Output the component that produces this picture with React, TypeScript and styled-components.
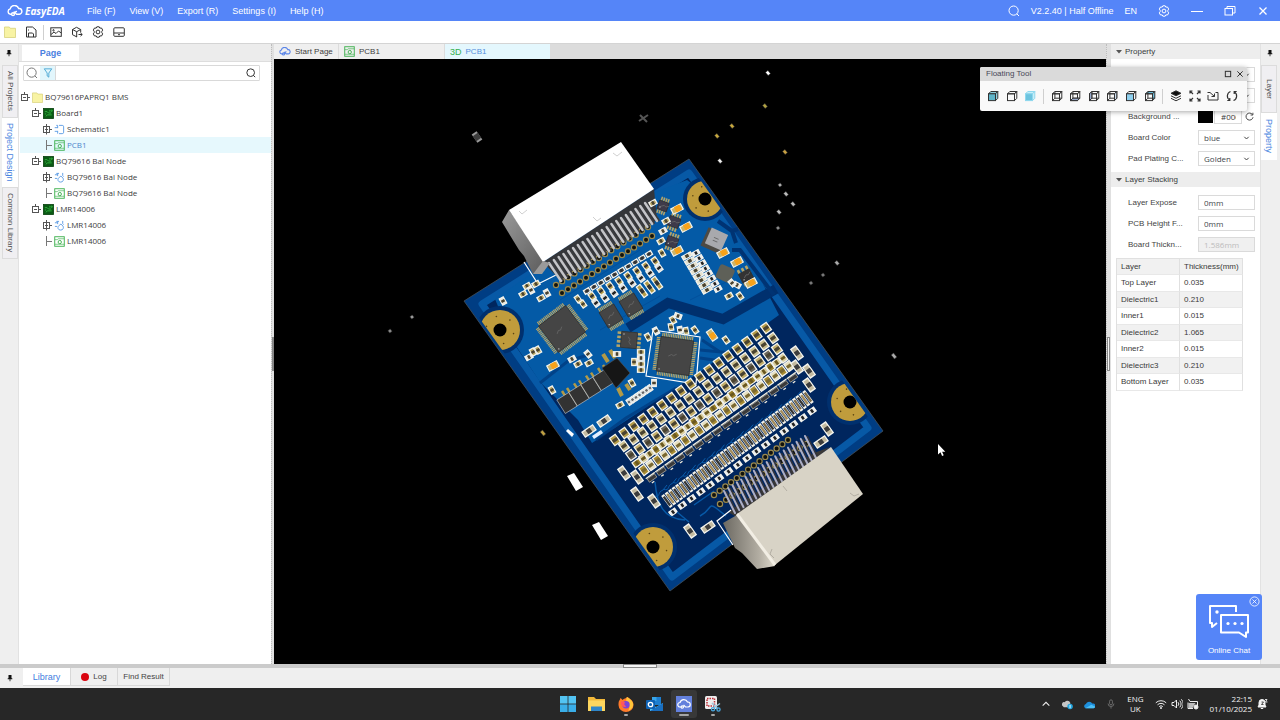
import React from "react";
import styled, { createGlobalStyle, css } from "styled-components";

const GlobalStyle = createGlobalStyle`
  *, *::before, *::after { box-sizing: border-box; }
  body { margin: 0; background: #efefef; color: #3a3a3a; font: 8px/12px "Liberation Sans", Arial, sans-serif; }
  button, input, select { font: inherit; color: inherit; margin: 0; padding: 0; border: 0; background: none; }
  button { display: flex; align-items: center; justify-content: center; }
  svg { display: block; flex: none; }
`;

const uiFont = css`font-family: "Open Sans", "Noto Sans", sans-serif;`;

/* ---------- shell ---------- */
const Shell = styled.div`display: flex; flex-direction: column; min-height: 100vh;`;
const TitleBar = styled.header`
  display: flex; align-items: center; height: 21px; padding: 0 11px 0 7px;
  background: #5585f8; color: #fff; font-size: 9px;
`;
const Brand = styled.a`
  ${uiFont} display: flex; align-items: center; gap: 2px; width: 80px; color: #fff;
  font-size: 10px; font-weight: 700; font-style: italic; text-decoration: none;
`;
const Menu = styled.nav`display: flex; gap: 14px; flex: 1;`;
const MenuButton = styled.button`height: 20px;`;
const TitleTools = styled.div`display: flex; align-items: center; gap: 11px;`;
const WindowTools = styled.div`display: flex; align-items: center; gap: 21px; padding-left: 10px;`;

const Divider = styled.span`width: 1px; height: 15px; background: #cfcfcf;`;
const ToolBar = styled.div`
  display: flex; align-items: center; gap: 9px; height: 22px; padding: 0 4px; background: #fff;
  ${Divider} { margin: 0 -3px; }
`;
const Workspace = styled.main`display: flex; flex: 1; position: relative; border-top: 1px solid #d4d4d4;`;

/* ---------- side rails ---------- */
const Rail = styled.aside<{ $right?: boolean }>`
  display: flex; flex-direction: column; align-items: ${p => (p.$right ? "flex-start" : "flex-end")};
  width: ${p => (p.$right ? 20 : 19)}px; background: #efefef;
  border-${p => (p.$right ? "left" : "right")}: 1px solid #e2e2e2;
`;
const PinSlot = styled.button`width: 18px; height: 21px; padding-bottom: 4px;`;
const RailTab = styled.button<{ $active?: boolean; $size: number }>`
  width: 16px; height: ${p => p.$size}px; writing-mode: vertical-rl;
  border: 1px solid ${p => (p.$active ? "#fff" : "#dcdcdc")};
  background: ${p => (p.$active ? "#fff" : "#f0eff2")};
  color: ${p => (p.$active ? "#4a86e0" : "#505050")};
  font-size: ${p => (p.$active ? 9 : 8)}px;
`;

/* ---------- project tree ---------- */
const ProjectPanel = styled.section`display: flex; flex-direction: column; width: 252px; background: #fff;`;
const PanelTabs = styled.div`
  display: flex; align-items: flex-end; height: 18px; padding-left: 3px;
  background: #ececec; border-bottom: 1px solid #ddd;
`;
const PanelTab = styled.button`
  width: 57px; height: 16px; background: #fff; color: #4a80e0; font-size: 9px; font-weight: 700;
`;
const SearchBar = styled.form`
  display: flex; align-items: center; height: 16px; margin: 3px 11px 8px 4px;
  border: 1px solid #d9d9d9; border-radius: 1px;
`;
const SearchIcon = styled.button<{ $tint?: boolean }>`
  width: 16px; height: 14px; background: ${p => (p.$tint ? "#e2f6fc" : "transparent")};
  border-right: 1px solid ${p => (p.$tint ? "#d9d9d9" : "transparent")};
`;
const SearchInput = styled.input`flex: 1; min-width: 0; height: 14px; outline: 0;`;
const Tree = styled.ul`list-style: none; margin: 0; padding: 0;`;
const TreeRow = styled.li<{ $level: number; $active?: boolean }>`
  ${uiFont} display: flex; align-items: center; gap: 2px; height: 16px;
  padding-left: ${p => p.$level * 11}px; margin-left: 1px;
  background: ${p => (p.$active ? "#e6f8fd" : "transparent")};
  color: ${p => (p.$active ? "#4d86cc" : "#404040")};
`;

const Splitter = styled.div<{ $w: number }>`
  display: flex; align-items: center; width: ${p => p.$w}px; background: #e0e0e0; border-left: 1px dotted #bdbdbd;
`;
const Grip = styled.button`width: 3px; height: 34px; border: 1px solid #888; background: #f4f4f4;`;

/* ---------- documents ---------- */
const Documents = styled.section`display: flex; flex: 1; min-width: 0; flex-direction: column; background: #000;`;
const DocTabs = styled.div`display: flex; height: 15px; background: #dcdcdc;`;
const DocTab = styled.button<{ $w: number; $active?: boolean }>`
  justify-content: flex-start; gap: 4px; width: ${p => p.$w}px; padding-left: 5px;
  border-right: 1px solid #dcdcdc;
  background: ${p => (p.$active ? "#e4f7fd" : "#efefef")}; color: ${p => (p.$active ? "#5590dc" : "#404040")};
`;
const ThreeD = styled.span`color: #35b052; font-size: 9px;`;
const Scene = styled.div`flex: 1; display: flex; min-height: 0; svg { flex: 1; width: 100%; min-width: 0; }`;

/* ---------- floating tool ---------- */
const FloatTool = styled.div`
  position: absolute; top: 23px; right: 33px; width: 267px; height: 44px; background: #f9f9f9;
  box-shadow: 0 1px 5px rgba(0, 0, 0, 0.35); border-radius: 2px; overflow: hidden;
`;
const FloatHead = styled.div`
  display: flex; align-items: center; height: 14px; padding: 0 1px 0 6px; background: #dadada; color: #484858;
`;
const FloatTitle = styled.span`flex: 1;`;
const FloatIcons = styled.div`display: flex; align-items: center; justify-content: space-between; height: 30px; padding: 0 9px 0 7px;`;
const IconButton = styled.button`min-width: 12px; height: 14px;`;

/* ---------- properties ---------- */
const PropertyPanel = styled.section`width: 149px; background: #fff;`;
const Group = styled.button`
  justify-content: flex-start; gap: 2px; width: 100%; height: 15px; padding-left: 4px; background: #ededed; color: #3a4040;
`;
const Fields = styled.div`display: flex; flex-direction: column; gap: 6px; padding: 8px 5px 6px 17px;`;
const Field = styled.div`display: flex; align-items: center; height: 15px;`;
const FieldLabel = styled.label`width: 70px; white-space: nowrap; color: #444;`;
const box = css`
  ${uiFont} width: 57px; height: 15px; padding: 0 5px; border: 1px solid #dadada; background: #fff; color: #3f464c;
`;
const TextField = styled.input`${box} &:disabled { background: #f0f0f0; color: #bcbcbc; }`;
const SelectWrap = styled.div`
  display: grid; align-items: center; width: 57px;
  & > * { grid-area: 1 / 1; }
  svg { justify-self: end; margin-right: 5px; pointer-events: none; }
`;
const Select = styled.select`${box} appearance: none; line-height: 12px;`;
const ColorRow = styled.div`display: flex; align-items: center; gap: 1px; width: 57px;`;
const Swatch = styled.span`width: 15px; height: 12px; background: #000;`;
const HexField = styled.input`${uiFont} width: 28px; height: 15px; padding: 0 5px 0 6px; border: 1px solid #dadada;`;
const LayerTable = styled.table`
  width: 127px; margin-left: 5px; border-spacing: 0; table-layout: fixed; text-align: left;
  border-top: 1px solid #e0e0e0; border-left: 1px solid #e0e0e0;
  th, td { height: 16px; padding: 0 0 0 4px; font-weight: 400; line-height: 12px;
    border-right: 1px solid #e0e0e0; border-bottom: 1px solid #e8e8e8; white-space: nowrap; }
  th, tbody tr:nth-child(even) td { background: #f1f1f1; }
  tbody tr:nth-child(odd) td { height: 17px; }
`;

/* ---------- bottom ---------- */
const BottomSplitter = styled.div`display: flex; justify-content: center; height: 4px; background: #cbcbcb;`;
const BottomGrip = styled.button`width: 34px; height: 4px; border: 1px solid #888; background: #f4f4f4;`;
const BottomBar = styled.div`display: flex; height: 20px; background: #efefef;`;
const BottomPin = styled.button`width: 23px; padding-right: 3px;`;
const BottomTab = styled.button<{ $w: number; $active?: boolean }>`
  gap: 4px; width: ${p => p.$w}px; height: 18px; border-right: 1px solid #d8d8d8; border-bottom: 1px solid #d8d8d8;
  background: ${p => (p.$active ? "#fff" : "#efefef")}; color: ${p => (p.$active ? "#3f7ee0" : "#444")};
  font-size: ${p => (p.$active ? 9 : 8)}px;
`;
const RedDot = styled.span`width: 8px; height: 8px; border-radius: 50%; background: #da0510;`;

const TaskBar = styled.footer`
  ${uiFont} display: grid; grid-template-columns: 1fr auto 1fr; align-items: center;
  height: 32px; background: #272727; color: #f2f2f2; line-height: 10px;
`;
const Apps = styled.div`grid-column: 2; display: flex; gap: 3px;`;
const AppButton = styled.button<{ $open?: boolean; $active?: boolean }>`
  flex-direction: column; gap: 2px; width: 26px; height: 28px; padding-top: 4px; border-radius: 3px;
  background: ${p => (p.$active ? "#383838" : "transparent")};
  &::after { content: ""; height: 2px; border-radius: 1px; width: ${p => (p.$active ? 10 : 4)}px;
    background: ${p => (p.$open ? "#a5a5a5" : "transparent")}; }
`;
const Tray = styled.div`display: flex; align-items: center; justify-content: flex-end; padding-right: 12px; gap: 11px;`;
const TrayGroup = styled.div`display: flex; align-items: center; gap: 4px;`;
const TrayText = styled.div<{ $end?: boolean }>`text-align: ${p => (p.$end ? "right" : "center")};`;

const Chat = styled.aside`
  position: absolute; right: 18px; bottom: 4px; width: 66px; height: 66px; border-radius: 3px;
  background: #5585f8; color: #fff; display: flex; flex-direction: column; align-items: center;
`;
const ChatClose = styled.button`align-self: flex-end; width: 15px; height: 15px;`;
const ChatOpen = styled.button`flex-direction: column; gap: 5px; margin-top: -5px; color: #fff;`;

/* ---------- icons ---------- */
type IconProps = { s?: number; c?: string; w?: number; children: React.ReactNode };
const Icon = ({ s = 12, c = "#333", w = 1, children }: IconProps) => (
  <svg width={s} height={s} viewBox="0 0 12 12" fill="none" stroke={c} strokeWidth={w} aria-hidden="true">{children}</svg>
);
const Cloud = ({ c, width = 16, w = 1.4 }: { c: string; width?: number; w?: number }) => (
  <svg width={width} height={Math.round(width * 0.75)} viewBox="0 0 16 12" fill="none" stroke={c} strokeWidth={w} strokeLinecap="round" aria-hidden="true">
    <path d="M4.6 9.2H3.5A2.7 2.7 0 0 1 3.2 3.9 4.4 4.4 0 0 1 11.7 3.6 2.8 2.8 0 0 1 12.4 9.2H9.6L7.2 7" />
    <circle cx="6" cy="9.2" r="1.4" /><path d="M7 8.2L9.4 6.4" />
  </svg>
);
const Lens = ({ c = "#444", s = 12, w = 1 }: { c?: string; s?: number; w?: number }) => (
  <Icon s={s} c={c} w={w}><circle cx="5.6" cy="5.6" r="4.6" /><path d="M8.8 8.8L11 11" /></Icon>
);
const Gear = ({ c = "#333" }: { c?: string }) => (
  <Icon c={c}><path d="M4.8 .8h2.4l.6 1.300 1.700-.1 1.200 2.100-.9 1.300v1.200l.9 1.300-1.200 2.100-1.700-.1-.6 1.300H4.800l-.6-1.300-1.700.1-1.200-2.100.9-1.300V5.400l-.9-1.300L2.500 2l1.700.1z" /><circle cx="6" cy="6" r="1.900" /></Icon>
);
const Pin = () => (
  <svg width="6" height="8" viewBox="0 0 6 8" aria-hidden="true"><path d="M1.500 1h3v3.200h.8v1H3.400v2H2.600v-2H.7v-1h.8z" fill="#111" /></svg>
);
const Folder = ({ s = 12 }: { s?: number }) => (
  <svg width={s} height={s} viewBox="0 0 12 12" aria-hidden="true"><path d="M.5 1h4.800l1 1.300h5.200v9.200H.5z" fill="#f8f3a4" stroke="#d8d27c" strokeWidth=".8" /></svg>
);
const PcbIcon = () => (
  <Icon s={11} c="#3cb04c"><rect x=".8" y=".8" width="10.400" height="10.400" /><path d="M1 4h2.500l1.200-1H11M1 9h10" strokeWidth=".7" /><circle cx="6.300" cy="6.600" r="1.800" /></Icon>
);
const BoardIcon = () => (
  <Icon s={11} c="#37c244" w={0.9}><rect x=".5" y=".5" width="11" height="11" fill="#0b5a14" stroke="#0a4310" /><path d="M2 4h2.500l1.500 1.500h3M3 9l2-1.500h4.500M7.500 2v2M2 6.500h1.500" /><circle cx="9.500" cy="3" r=".7" /></Icon>
);
const SchIcon = ({ multi }: { multi?: boolean }) => (
  <Icon s={11} c="#5a9ae4">
    {multi
      ? <><path d="M1 3h3M1 7h2.500M2.500 1.500h3M4 1.500v3M9.500 1v3l1 1" /><path d="M7.500 4.500c-3 2-3.500 3-3 5 .8 2 4.500 2 5.500 0 .8-2.500-.5-3.500-2.500-5z" /></>
      : <><path d="M5.500 1.500H9a1.500 1.500 0 0 1 1.500 1.500v6A1.500 1.500 0 0 1 9 10.500H5.500M4 1.500v3M4 7.500v3M.8 4h3.200M.8 8H4M2.500 1.500H4" /></>}
  </Icon>
);
const Expander = ({ kind }: { kind: "minus" | "plus" | "leaf" }) => (
  <svg width="10" height="16" viewBox="0 0 10 16" fill="none" stroke="#555" aria-hidden="true">
    {kind === "leaf" ? <path d="M4.500 3v10M5 8.500h5" stroke="#777" /> : <><rect x="1.500" y="5.500" width="6" height="6" /><path d="M3 8.500h3M8 8.500h2M4.500 3v2" />{kind === "plus" && <path d="M4.500 6v5M4.500 12v1.500" />}</>}
  </svg>
);
const Caret = () => <svg width="8" height="6" viewBox="0 0 8 6" aria-hidden="true"><path d="M1 1h6L4 4.500z" fill="#555" /></svg>;
const Chevron = () => <svg width="7" height="6" viewBox="0 0 7 6" fill="none" stroke="#444" aria-hidden="true"><path d="M1.300 1.800L3.500 4l2.200-2.200" /></svg>;

const Cube = ({ front = "none", side = "none", back, face }: { front?: string; side?: string; back?: string; face?: "bottom" | "left" | "right" }) => (
  <Icon c={back === "glow" ? "#8ed8ee" : "#333"}>
    <path d="M1.500 3.800L3.800 1.500h7L8.500 3.800z" fill={side} /><path d="M8.500 3.800l2.300-2.300v6.800L8.500 10.600z" fill={side} />
    <rect x="1.500" y="3.800" width="7" height="6.800" fill={front} />
    {back === "wire" && <path d="M3.900 1.600v6.600h6.700M1.600 10.500l2.300-2.300" />}
    {face === "bottom" && <path d="M1.500 10.600l2.300-2.400h7L8.500 10.600z" fill="#9ac" />}
    {face === "left" && <path d="M1.500 3.800l2.300-2.300v6.700l-2.300 2.400z" fill="#9ac" />}
    {face === "right" && <path d="M8.500 3.800l2.300-2.300v6.700l-2.300 2.400z" fill="#cde" />}
  </Icon>
);

/* ---------- board scene ---------- */
type P = [number, number];
const GOLD = "#b39a46";
const pts = (list: P[]) => list.map(p => p.join(",")).join(" ");
const along = (a: P, b: P, n: number, draw: (x: number, y: number, i: number) => React.ReactNode) =>
  Array.from({ length: n }, (_, i) => {
    const t = n === 1 ? 0 : i / (n - 1);
    return <React.Fragment key={i}>{draw(a[0] + (b[0] - a[0]) * t, a[1] + (b[1] - a[1]) * t, i)}</React.Fragment>;
  });

const Part = ({ x, y, r = 54, w = 9, h = 5, pad = GOLD, body = "#4a4330" }: { x: number; y: number; r?: number; w?: number; h?: number; pad?: string; body?: string }) => (
  <g transform={`translate(${x} ${y}) rotate(${r})`}>
    <rect x={-w / 2} y={-h / 2} width={w} height={h} fill={pad} stroke="#f4f4ee" strokeWidth="1.300" />
    <rect x={-w * 0.18} y={-h * 0.4} width={w * 0.36} height={h * 0.8} fill={body} />
  </g>
);
const Quad = ({ x, y, w, h, r, pins = 14, sides = 4, fill = "#454545" }: { x: number; y: number; w: number; h: number; r: number; pins?: number; sides?: number; fill?: string }) => (
  <g transform={`translate(${x} ${y}) rotate(${r})`}>
    {along([-w / 2 + 1.5, 0], [w / 2 - 1.5, 0], pins, px => (
      <path d={`M${px} ${-h / 2 - 4}V${h / 2 + 4}`} stroke="#b5a468" strokeWidth={(w / pins) * 0.65} />
    ))}
    {sides === 4 && along([0, -h / 2 + 1.5], [0, h / 2 - 1.5], pins, (_, py) => (
      <path d={`M${-w / 2 - 4} ${py}H${w / 2 + 4}`} stroke="#b5a468" strokeWidth={(h / pins) * 0.65} />
    ))}
    <rect x={-w / 2} y={-h / 2} width={w} height={h} fill={fill} stroke="#2a2a2a" strokeWidth=".7" />
    <path d={`M${-w / 5} 1l3-2 2 1 3-2`} stroke="#6a6a6a" strokeWidth=".7" fill="none" />
    <circle cx={-w / 2 + 2.5} cy={h / 2 - 2.5} r=".7" fill="#bbb" />
  </g>
);
const Mount = ({ x, y, r }: { x: number; y: number; r: number }) => (
  <g>
    <circle cx={x} cy={y} r={r + 4} fill="#00306e" /><circle cx={x} cy={y} r={r} fill="#c09c3c" />
    <circle cx={x} cy={y} r="6.500" fill="#000" />
    {[15, 75, 135, 195, 255, 315].map(a => (
      <circle key={a} cx={x + Math.cos((a * Math.PI) / 180) * r * 0.7} cy={y + Math.sin((a * Math.PI) / 180) * r * 0.7} r=".8" fill="#5a4414" />
    ))}
  </g>
);
const Via = ({ x, y }: { x: number; y: number }) => (
  <circle cx={x} cy={y} r="2.600" fill="#12120c" stroke="#9a8a50" strokeWidth="1.200" />
);

const outline: P[] = [[689, 159], [883, 431], [670, 591], [464, 301]];
const orange: [number, number, number][] = [
  [677, 209, -28], [686, 227, -28], [677, 251, -28], [723, 253, -28], [737, 262, -28], [751, 283, -28], [712, 335, 55], [553, 366, -28],
];
const loose: [number, number, number][] = [
  [503, 301, 60], [523, 294, -30], [527, 286, -30], [531, 290, 60], [536, 284, -30], [541, 298, -30], [547, 293, 60], [578, 299, 55], [583, 304, 55], [529, 357, -30], [533, 352, 60], [538, 350, 60], [572, 359, -30], [578, 364, -30], [589, 363, -30], [588, 354, 50],
  [653, 203, -30], [666, 221, -30], [663, 231, -30], [661, 241, -30], [662, 253, 60], [656, 331, 60], [648, 337, 60], [671, 327, 80], [680, 330, 80], [686, 331, 80], [673, 320, 60], [678, 316, 20], [695, 330, 55], [726, 340, 55],
  [617, 354, 0], [634, 362, 90], [641, 352, 0], [641, 358, 0], [641, 364, 0], [641, 370, 0], [654, 383, 90], [620, 405, -30], [632, 383, 60], [737, 285, 30], [729, 296, -30], [740, 296, 55], [732, 283, 50], [552, 390, 60],
];
const corners: [number, number, number][] = [
  [624, 473, 54], [637, 477, 54], [637, 494, 54], [654, 501, 54], [797, 353, 54], [797, 367, 54], [809, 371, 54], [809, 385, 54],
  [690, 531, 54], [708, 527, -35], [827, 429, 54], [821, 442, -35], [589, 431, -35], [604, 421, -35],
];
const debris: [number, number, string, number][] = [
  [768, 73, "#fff", 4], [765, 106, "#b0a040", 4], [732, 126, "#c8a83c", 4], [717, 136, "#c8a83c", 4], [785, 152, "#c8a040", 4], [720, 161, "#eee", 4],
  [780, 185, "#aaa", 3], [786, 194, "#bbb", 4], [793, 204, "#bbb", 4], [779, 212, "#bbb", 4], [778, 228, "#888", 3], [837, 263, "#aaa", 4], [823, 275, "#777", 3], [811, 283, "#777", 3], [894, 356, "#aaa", 5], [412, 317, "#999", 3], [390, 331, "#888", 3], [543, 433, "#c0a040", 5],
];

const BoardScene = () => (
  <svg viewBox="274 59 832 605" preserveAspectRatio="xMidYMid meet" role="img" aria-label="3D view of PCB1">
    <defs>
      <clipPath id="edge"><polygon points="689,164 878,431 671,586 470,305" /></clipPath>
      <linearGradient id="side" x1="0" y1="0" x2="1" y2="1"><stop offset="0" stopColor="#9a9a9a" /><stop offset="1" stopColor="#5b5b5b" /></linearGradient>
      <linearGradient id="sideB" x1="0" y1="0" x2="1" y2="0"><stop offset="0" stopColor="#6c6962" /><stop offset=".7" stopColor="#b3aea3" /><stop offset="1" stopColor="#ded9cc" /></linearGradient>
    </defs>
    <polygon points={pts(outline)} fill="#003d83" stroke="#44505a" strokeWidth=".8" />
    <polygon points="689,173 868,428 672,577 482,304" fill="#00265e" stroke="#0759a6" strokeWidth="7" strokeLinejoin="round" />
    <polygon points="495,299 640,198 687,180 700,190 740,244 763,284 779,315 737,345 700,372 592,443 578,420 540,382 512,340" fill="#045aa6" />
    <path d="M628 328L668 303 723 319 776 289" fill="none" stroke="#00306e" strokeWidth="10" />
    <path d="M718 221l14 10M736 243l-4-12 6-2M732 250l8 0 34 45" fill="none" stroke="#003373" strokeWidth="4" />
    <path d="M540 383l28-22 20-6M596 440l30-22 50-30M700 350l32 3M700 358l28 4M702 340l18 12" fill="none" stroke="#00387c" strokeWidth="3" opacity=".7" />
    <path d="M560 300l80-50M600 330l60-34M690 300l40-20" stroke="#02509c" strokeWidth="1" />
    <g clipPath="url(#edge)">
      <Mount x={705} y={199} r={18} /><Mount x={500} y={330} r={20} /><Mount x={850} y={402} r={19} /><Mount x={653} y={547} r={20} />
    </g>

    {/* upper connector */}
    <path d="M524 262l14 22 20-10" fill="none" stroke="#fff" strokeWidth="1.200" />
    <polygon points="543,262 654,189 657,220 562,282" fill="#34363a" />
    {along([556, 285], [648, 227], 16, (x, y) => <Via x={x} y={y} />)}
    {along([562, 293], [652, 236], 16, (x, y) => <Via x={x} y={y} />)}
    {along([549, 263], [645, 203], 21, (x, y) => <g><path d={`M${x + 2} ${y}l12 18`} stroke="#3c3d40" strokeWidth="2.500" /><path d={`M${x} ${y}l12 18`} stroke="#c3c4c8" strokeWidth="2.400" strokeLinecap="round" /></g>)}
    <polygon points="509,210 502,222 519,250 524,256 533,274 546,263" fill="url(#side)" />
    <polygon points="621,142 654,189 543,262 509,210" fill="#fff" />
    <path d="M519 211l3 3 5-4M593 217l4 4 4-3M613 153l4 3 5-4" fill="none" stroke="#c4c4c4" strokeWidth=".8" />
    <polygon points="533,274 543,261 550,263 542,274" fill="#9a9a9a" />

    {/* connector pull-up network */}
    {along([587, 291], [649, 254], 10, (x, y) => <Part x={x} y={y} r={-31} w={6} h={4} pad="#444" body="#333" />)}
    {along([592, 296], [655, 261], 8, (x, y) => <Part x={x} y={y} w={7} h={5} body="#333" />)}
    {along([596, 303], [659, 268], 8, (x, y) => <Part x={x} y={y} w={7} h={5} pad="#ddd" body="#222" />)}
    {along([642, 291], [657, 283], 3, (x, y) => <Part x={x} y={y} w={13} h={4.5} body="#333" />)}

    {/* power section */}
    {along([687, 256], [707, 290], 8, (x, y) => <Part x={x} y={y} r={-30} w={10} h={4} pad="#e4e0cc" />)}
    {along([696, 253], [718, 289], 8, (x, y) => <Part x={x} y={y} r={-30} w={7} h={4} pad="#eee" body="#222" />)}
    <Quad x={663} y={206} w={10} h={9} r={20} pins={4} sides={2} fill="#3e3a4a" />
    <Quad x={674} y={222} w={11} h={10} r={20} pins={4} sides={2} fill="#3e3a4a" />
    <Quad x={672} y={242} w={11} h={10} r={20} pins={4} sides={2} fill="#3e3a4a" />
    <g transform="translate(715 240) rotate(24)"><rect x="-11" y="-9" width="20" height="20" fill="#4d4a44" /><rect x="-8" y="-10" width="18" height="17" fill="#a8a9ad" /><path d="M-2-2h5M-2 1h5" stroke="#666" /></g>
    <g transform="translate(725 274) rotate(24)"><rect x="-8" y="-8" width="16" height="15" rx="3" fill="#5e6058" /></g>
    <Quad x={746} y={276} w={12} h={10} r={-28} pins={3} sides={2} fill="#333" />

    {/* processors */}
    <Quad x={562} y={329} w={34} h={33} r={-37} pins={18} />
    <Quad x={611} y={316} w={17} h={18} r={-31} pins={9} sides={2} />
    <Quad x={631} y={305} w={17} h={18} r={-31} pins={9} sides={2} />
    <Quad x={629} y={340} w={16} h={16} r={95} pins={4} sides={2} />
    <polygon points="653,330 700,337 696,384 646,376" fill="none" stroke="#fff" strokeWidth="1.200" />
    <Quad x={675} y={356} w={33} h={35} r={8} pins={18} />

    {/* balancing transistors */}
    {along([564, 395], [600, 372], 4, (x, y) => <path d={`M${x - 2} ${y - 4}l11 17M${x + 3} ${y - 7}l11 17`} stroke={GOLD} strokeWidth="2.500" />)}
    {along([567, 403], [603, 380], 4, (x, y) => <g transform={`translate(${x} ${y}) rotate(-32)`}><rect x="-7" y="-8" width="14" height="16" fill="#323232" stroke="#ddd" strokeWidth=".5" /></g>)}
    <path d="M603 354l5 8M610 350l5 8M618 388l4 8M626 384l4 6" stroke={GOLD} strokeWidth="4" />
    <polygon points="602,368 617,358 630,373 616,388" fill="#161616" stroke="#555" strokeWidth=".6" />
    {along([629, 402], [650, 388], 7, (x, y) => <Part x={x} y={y} w={6} h={3} pad="#ddd" body="#666" />)}
    <polygon points="566,431 572,437 574,434 568,429" fill="#fff" />
    <polygon points="592,436 601,430 603,433 594,439" fill="#e5f0ff" />

    {/* cell monitoring array */}
    {along([615, 440], [766, 328], 17, (x, y) => <Part x={x} y={y} w={9} h={7} />)}
    {along([624, 446], [773, 338], 17, (x, y) => <Part x={x} y={y} w={9} h={7} pad="#c9bd8c" />)}
    {along([631, 455], [777, 349], 18, (x, y, i) => <Part x={x} y={y} w={9} h={7} pad={i % 2 ? "#c3ae6a" : "#6a655c"} />)}
    {along([637, 463], [783, 358], 24, (x, y, i) => <Part x={x} y={y} r={i % 2 ? 54 : -36} w={8} h={6} pad={i % 3 ? "#d8cc9c" : "#9a8028"} body="#6a5820" />)}
    {along([644, 470], [789, 366], 22, (x, y, i) => <Part x={x} y={y} w={9} h={6.5} pad={i % 2 ? "#e6dfc0" : "#a88c30"} body="#7a6830" />)}
    {along([652, 478], [793, 378], 16, (x, y) => <g transform={`translate(${x} ${y}) rotate(-35)`}><path d="M-5.500-3h11M-3 4h3" stroke="#f1eee0" strokeWidth="1.300" /><rect x="-4.500" y="-2" width="9" height="4" fill="#3a3a3a" stroke="#c8c4b4" strokeWidth=".6" /></g>)}
    {along([663, 490], [797, 396], 15, (x, y) => <path d={`M${x} ${y}c-6 2-2 8-9 6M${x} ${y}l4-5`} fill="none" stroke="#0a5cab" strokeWidth="1" />)}
    {along([667, 501], [808, 397], 42, (x, y, i) => <g transform={`translate(${x} ${y}) rotate(-36)`}><rect x="-1.700" y="-7.500" width="3.400" height="15" fill="#f5f3ea" /><rect x="-1.200" y="-5.500" width="2.300" height="11" fill={["#343434", "#a08a5c", "#7b6a48"][i % 3]} /></g>)}
    {along([673, 512], [812, 411], 16, (x, y) => <Part x={x} y={y} r={-36} w={7} h={4.5} pad="#eee" body="#222" />)}
    <path d="M655 482c2 22 8 37 30 38M677 512l12 10M694 505l20-14M700 516c12-6 8-14 16-8l10 8" fill="none" stroke="#0759a6" strokeWidth="1.500" />

    {/* lower connector */}
    {along([720, 504], [806, 444], 15, (x, y) => <Via x={x} y={y} />)}
    {along([714, 495], [788, 440], 14, (x, y) => <Via x={x} y={y} />)}
    <polygon points="728,512 814,453 830,447 742,520" fill="#3b3937" />
    {along([735, 513], [816, 458], 20, (x, y) => <g><path d={`M${x + 2} ${y}l-11-22`} stroke="#33343c" strokeWidth="1.600" /><path d={`M${x} ${y}l-11-22`} stroke="#adafc6" strokeWidth="2" strokeLinecap="round" /></g>)}
    <path d="M731 510l-14 11 16 24" fill="none" stroke="#fff" strokeWidth="1.200" />
    <polygon points="737,515 723,523 735,548 742,553 757,569 775,566 746,518" fill="url(#sideB)" />
    <polygon points="831,447 863,494 775,565 737,514" fill="#d8d3c6" />
    <path d="M737 514l38 51" stroke="#f2eee4" strokeWidth="3" />
    <path d="M783 486l4 5M850 493l4 3 5-2M772 549l-2 5 4 4" fill="none" stroke="#aaa59a" strokeWidth=".8" />

    {loose.map(([x, y, r], i) => <Part key={i} x={x} y={y} r={r} w={7} h={4.5} pad={i % 3 ? "#b9a762" : "#e8e6dc"} />)}
    {corners.map(([x, y, r], i) => <Part key={i} x={x} y={y} r={r} w={13} h={6} pad="#c4bba0" body="#3c3c3c" />)}
    {orange.map(([x, y, r], i) => <g key={i} transform={`translate(${x} ${y}) rotate(${r})`}><rect x="-5.500" y="-3" width="11" height="6" fill="#cdb56a" stroke="#f4f4ee" strokeWidth="1.200" /><rect x="-2" y="-3" width="6" height="6" fill="#f7a21a" /></g>)}

    {/* parts parked outside the board */}
    {debris.map(([x, y, c, s], i) => <rect key={i} x={-s / 2} y={-1.5} width={s} height="3" fill={c} stroke="#333" strokeWidth=".5" transform={`translate(${x} ${y}) rotate(50)`} />)}
    <g transform="translate(477 137) rotate(55)"><rect x="-5" y="-3" width="10" height="6" fill="#999" /><rect x="-3" y="-3" width="6" height="6" fill="#3c3c3c" /></g>
    <path d="M639 121l9-6M640 115l7 7" stroke="#555" strokeWidth="2" />
    <polygon points="567,476 574,473 583,487 576,491" fill="#fff" /><polygon points="592,525 599,522 608,536 601,540" fill="#fff" />
    <path d="M938 444v10.500l2.500-2.200 1.600 3.700 1.600-.7-1.600-3.600h3.200z" fill="#fff" />
  </svg>
);

/* ---------- data ---------- */
const layers = [["Top Layer", "0.035"], ["Dielectric1", "0.210"], ["Inner1", "0.015"], ["Dielectric2", "1.065"], ["Inner2", "0.015"], ["Dielectric3", "0.210"], ["Bottom Layer", "0.035"]];
const tree: { label: string; level: number; kind: "minus" | "plus" | "leaf"; icon: React.ReactNode; active?: boolean }[] = [
  { label: "BQ79616PAPRQ1 BMS", level: 0, kind: "minus", icon: <Folder s={11} /> },
  { label: "Board1", level: 1, kind: "minus", icon: <BoardIcon /> },
  { label: "Schematic1", level: 2, kind: "plus", icon: <SchIcon /> },
  { label: "PCB1", level: 2, kind: "leaf", icon: <PcbIcon />, active: true },
  { label: "BQ79616 Bal Node", level: 1, kind: "minus", icon: <BoardIcon /> },
  { label: "BQ79616 Bal Node", level: 2, kind: "plus", icon: <SchIcon multi /> },
  { label: "BQ79616 Bal Node", level: 2, kind: "leaf", icon: <PcbIcon /> },
  { label: "LMR14006", level: 1, kind: "minus", icon: <BoardIcon /> },
  { label: "LMR14006", level: 2, kind: "plus", icon: <SchIcon multi /> },
  { label: "LMR14006", level: 2, kind: "leaf", icon: <PcbIcon /> },
];
const SelectField = ({ id, label, value }: { id: string; label: string; value: string }) => (
  <Field>
    <FieldLabel htmlFor={id}>{label}</FieldLabel>
    <SelectWrap><Select id={id} defaultValue={value}><option>{value}</option></Select><Chevron /></SelectWrap>
  </Field>
);
const InputField = ({ id, label, value, disabled }: { id: string; label: string; value: string; disabled?: boolean }) => (
  <Field><FieldLabel htmlFor={id}>{label}</FieldLabel><TextField id={id} defaultValue={value} disabled={disabled} /></Field>
);

export default function App() {
  return (
    <Shell>
      <GlobalStyle />
      <TitleBar>
        <Brand href="#"><Cloud c="#fff" />EasyEDA</Brand>
        <Menu>{["File (F)", "View (V)", "Export (R)", "Settings (I)", "Help (H)"].map(m => <MenuButton key={m}>{m}</MenuButton>)}</Menu>
        <TitleTools>
          <IconButton aria-label="Search"><Lens c="#fff" /></IconButton><span>V2.2.40 | Half Offline</span><MenuButton>EN</MenuButton>
          <WindowTools>
            <IconButton aria-label="Options"><Gear c="#fff" /></IconButton>
            <IconButton aria-label="Minimize"><Icon c="#fff"><path d="M0 6.500h12" /></Icon></IconButton>
            <IconButton aria-label="Restore"><Icon c="#fff"><rect x="1" y="3.500" width="7.500" height="6.500" /><path d="M3 3.500v-2h8v6.500H8.500" /></Icon></IconButton>
            <IconButton aria-label="Close"><Icon c="#fff" w={1.3}><path d="M2.500 2.500l7 7M9.500 2.500l-7 7" /></Icon></IconButton>
          </WindowTools>
        </TitleTools>
      </TitleBar>

      <ToolBar>
        <IconButton aria-label="Open"><Folder /></IconButton>
        <IconButton aria-label="Save"><Icon><path d="M1.500 1h6L11 4v7H1.500zM3.500 11V7h4l1 1v3M3.500 3.500v1" /></Icon></IconButton>
        <Divider />
        <IconButton aria-label="Export image"><Icon><rect x=".8" y="1.800" width="10.500" height="8.500" /><path d="M1 8.500l3-2.500 2 1.500L8.500 5l2.800 2" /><circle cx="3.500" cy="4.300" r=".7" /></Icon></IconButton>
        <IconButton aria-label="Export 3D file"><Icon><path d="M6 11l-4.500-2.300V3.500L5.500 1.300 9.700 3.500v3M1.500 3.500l4.200 2.200 4-2.200M5.700 5.700V11M7.500 8.500h3.500M9.500 7l1.800 1.500L9.500 10.200" /></Icon></IconButton>
        <IconButton aria-label="Settings"><Gear /></IconButton>
        <IconButton aria-label="Bottom panel"><Icon><rect x=".8" y="1.800" width="10.500" height="8.500" rx="1" /><path d="M1 7h10M5 8.700h2" /></Icon></IconButton>
      </ToolBar>

      <Workspace>
        <Rail>
          <PinSlot aria-label="Pin panel"><Pin /></PinSlot>
          <RailTab $size={53}>All Projects</RailTab>
          <RailTab $size={69} $active>Project Design</RailTab>
          <RailTab $size={72}>Common Library</RailTab>
        </Rail>
        <ProjectPanel>
          <PanelTabs><PanelTab>Page</PanelTab></PanelTabs>
          <SearchBar onSubmit={e => e.preventDefault()}>
            <SearchIcon type="button" aria-label="Search mode"><Lens c="#777" /></SearchIcon>
            <SearchIcon type="button" $tint aria-label="Filter"><Icon s={10} c="#3a9fcf"><path d="M1.500 1h9L7 6v5L5 9.500V6z" /></Icon></SearchIcon>
            <SearchInput aria-label="Search project" />
            <SearchIcon aria-label="Search"><Lens s={10} c="#333" w={1.2} /></SearchIcon>
          </SearchBar>
          <Tree>
            {tree.map((n, i) => <TreeRow key={i} $level={n.level} $active={n.active}><Expander kind={n.kind} />{n.icon}{n.label}</TreeRow>)}
          </Tree>
        </ProjectPanel>
        <Splitter $w={3}><Grip aria-label="Collapse left panel" /></Splitter>

        <Documents>
          <DocTabs>
            <DocTab $w={65}><Cloud c="#5b85e8" width={12} w={1.5} />Start Page</DocTab>
            <DocTab $w={106}><PcbIcon />PCB1</DocTab>
            <DocTab $w={106} $active><ThreeD>3D</ThreeD>PCB1</DocTab>
          </DocTabs>
          <Scene><BoardScene /></Scene>
        </Documents>
        <Splitter $w={5}><Grip aria-label="Collapse right panel" /></Splitter>

        <PropertyPanel>
          <Group><Caret />Property</Group>
          <Fields>
            <SelectField id="view" label="View" value="3D" />
            <SelectField id="unit" label="Unit" value="mm" />
            <Field>
              <FieldLabel htmlFor="bg">Background ...</FieldLabel>
              <ColorRow><Swatch /><HexField id="bg" defaultValue="#000000" />
                <IconButton aria-label="Reset colour"><Icon s={9} c="#444" w={1.3}><path d="M10 3.500A4.700 4.700 0 1 0 10.700 7M10.500 1v3H7.500" /></Icon></IconButton></ColorRow>
            </Field>
            <SelectField id="color" label="Board Color" value="blue" />
            <SelectField id="plating" label="Pad Plating C..." value="Golden" />
          </Fields>
          <Group><Caret />Layer Stacking</Group>
          <Fields>
            <InputField id="expose" label="Layer Expose" value="0mm" />
            <InputField id="height" label="PCB Height F..." value="0mm" />
            <InputField id="thick" label="Board Thickn..." value="1.586mm" disabled />
          </Fields>
          <LayerTable>
            <thead><tr><th>Layer</th><th>Thickness(mm)</th></tr></thead>
            <tbody>{layers.map(([n, t]) => <tr key={n}><td>{n}</td><td>{t}</td></tr>)}</tbody>
          </LayerTable>
        </PropertyPanel>
        <Rail $right>
          <PinSlot aria-label="Pin panel"><Pin /></PinSlot>
          <RailTab $size={48}>Layer</RailTab>
          <RailTab $size={47} $active>Property</RailTab>
        </Rail>

        <FloatTool>
          <FloatHead>
            <FloatTitle>Floating Tool</FloatTitle>
            <IconButton aria-label="Dock"><Icon s={8} w={1.5}><rect x="2" y="2" width="8" height="8" /></Icon></IconButton>
            <IconButton aria-label="Close tool"><Icon s={8} w={1.5}><path d="M2 2l8 8M10 2l-8 8" /></Icon></IconButton>
          </FloatHead>
          <FloatIcons>
            <IconButton aria-label="Normal view"><Cube front="#5fb4c8" side="#8fd0de" /></IconButton>
            <IconButton aria-label="Outline view"><Cube /></IconButton>
            <IconButton aria-label="Shaded view"><Cube front="#6cc3de" side="#c9eef8" back="glow" /></IconButton>
            <Divider />
            <IconButton aria-label="Top"><Cube back="wire" /></IconButton>
            <IconButton aria-label="Bottom"><Cube back="wire" face="bottom" /></IconButton>
            <IconButton aria-label="Left"><Cube back="wire" face="left" /></IconButton>
            <IconButton aria-label="Right"><Cube back="wire" face="right" /></IconButton>
            <IconButton aria-label="Front"><Cube front="#8fd0ee" /></IconButton>
            <IconButton aria-label="Back"><Cube side="#6fbcd8" back="wire" /></IconButton>
            <Divider />
            <IconButton aria-label="Layers"><Icon><path d="M6 .8l5 2.500-5 2.500L1 3.300z" fill="#111" /><path d="M1 5.800l5 2.500 5-2.500M1 8.300l5 2.500 5-2.500" /></Icon></IconButton>
            <IconButton aria-label="Fit all"><Icon w={1.2}><path d="M1 3.500V1h2.500M1 1l3 3M11 3.500V1H8.500M11 1L8 4M1 8.500V11h2.500M1 11l3-3M11 8.500V11H8.500M11 11L8 8" /></Icon></IconButton>
            <IconButton aria-label="Flip board"><Icon><path d="M.5 2.500h2.500L7.500 6.500M4.500 6.500h3v-3M1 5v5h10V2.500H8.500" /></Icon></IconButton>
            <IconButton aria-label="Rotate"><Icon w={1.2}><path d="M4.500 1.500a4.800 4.800 0 0 0-1 8.500M3.800 8v2.500H1.300M7.500 10.500a4.800 4.800 0 0 0 1-8.500M8.200 4V1.500h2.500" /></Icon></IconButton>
          </FloatIcons>
        </FloatTool>

        <Chat>
          <ChatClose aria-label="Close chat"><Icon s={11} c="#fff" w={0.9}><circle cx="6" cy="6" r="5" /><path d="M3.800 3.800l4.400 4.400M8.200 3.800L3.800 8.200" /></Icon></ChatClose>
          <ChatOpen>
            <svg width="42" height="36" viewBox="0 0 42 36" fill="none" stroke="#fff" strokeWidth="2" strokeLinejoin="round" aria-hidden="true">
              <path d="M28 8V2H2v17h2v4l5-4" /><path d="M13 11h27v17.500h-2V33l-7-4.500H13z" />
              <g fill="#fff" stroke="none"><circle cx="9" cy="8" r="1.700" /><circle cx="20" cy="19.500" r="1.600" /><circle cx="27" cy="19.500" r="1.600" /><circle cx="34" cy="19.500" r="1.600" /></g>
            </svg>
            Online Chat
          </ChatOpen>
        </Chat>
      </Workspace>

      <BottomSplitter><BottomGrip aria-label="Collapse bottom panel" /></BottomSplitter>
      <BottomBar>
        <BottomPin aria-label="Pin bottom panel"><Pin /></BottomPin>
        <BottomTab $w={48} $active>Library</BottomTab>
        <BottomTab $w={47}><RedDot />Log</BottomTab>
        <BottomTab $w={52}>Find Result</BottomTab>
      </BottomBar>

      <TaskBar>
        <Apps>
          <AppButton aria-label="Start"><svg width="16" height="16" viewBox="0 0 16 16"><g fill="#53c4f3"><rect width="7.600" height="7.600" /><rect x="8.400" width="7.600" height="7.600" /><rect y="8.400" width="7.600" height="7.600" fill="#3aaee8" /><rect x="8.400" y="8.400" width="7.600" height="7.600" fill="#3aaee8" /></g></svg></AppButton>
          <AppButton aria-label="File Explorer"><svg width="17" height="16" viewBox="0 0 17 16"><path d="M0 1h6l2 2h9v12H0z" fill="#f3b93a" /><path d="M0 4.500h17V15H0z" fill="#fcd65f" /><path d="M3 15v-4.500h11V15z" fill="#2f86c9" /></svg></AppButton>
          <AppButton $open aria-label="Firefox"><svg width="16" height="16" viewBox="0 0 16 16"><path d="M1 5c1-1 1-2 1.500-3 1 .7 1.500 1.300 2 2C6 2 8 3 9 1c3 1.500 6.500 4 6.500 8A7.500 7 0 0 1 .5 9C.5 7.500.6 6 1 5z" fill="#ff7a2a" /><path d="M9 1c3.500 2 7 5 6 9-1 3-3 4-5 5 2-3 2-6-1-8-1-2-1-4 0-6z" fill="#ffc53a" /><circle cx="8" cy="8.800" r="3.700" fill="#7a44d8" /><path d="M3 5.500c2 0 3 .5 4.500 1L6 8l2 2.500C6 12 3.500 10 3 8z" fill="#ff5560" /></svg></AppButton>
          <AppButton aria-label="Outlook"><svg width="17" height="16" viewBox="0 0 17 16"><path d="M6 1h9v8H6z" fill="#1d7ed0" /><path d="M6 1h4.500v4H6z" fill="#37a5ea" /><path d="M4 7l6 4 7-4v8H4z" fill="#4fc2f5" /><path d="M4 15l13-8v8z" fill="#1a6fc0" /><rect y="4" width="9" height="9" rx="1" fill="#0f62b4" /><circle cx="4.500" cy="8.500" r="2.200" fill="none" stroke="#fff" strokeWidth="1.300" /></svg></AppButton>
          <AppButton $open $active aria-label="EasyEDA"><svg width="16" height="16" viewBox="0 0 16 16"><rect width="16" height="16" fill="#6380dc" /><g fill="none" stroke="#fff" strokeWidth="1.200"><path d="M5 11H4a2.200 2.200 0 0 1 0-4.500 4 4 0 0 1 7.500-.5A2.500 2.500 0 0 1 12 11H9.500L7.500 9" /><circle cx="6.300" cy="11" r="1.200" /></g></svg></AppButton>
          <AppButton $open aria-label="Snipping Tool"><svg width="17" height="16" viewBox="0 0 17 16"><rect x="1" y="0" width="12" height="13" rx="1.500" fill="#eee" /><rect x="3" y="2.500" width="7.500" height="7.500" fill="none" stroke="#c0303a" strokeWidth="1.500" strokeDasharray="1.500 1" /><path d="M8 7l6 6M16 7.500L9.500 12" stroke="#9cc4dc" strokeWidth="1.500" /><circle cx="14.500" cy="13.500" r="1.600" fill="none" stroke="#4aa8e0" strokeWidth="1.300" /><circle cx="9" cy="13.200" r="1.600" fill="none" stroke="#4aa8e0" strokeWidth="1.300" /></svg></AppButton>
        </Apps>
        <Tray>
          <Icon s={10} c="#eee" w={1.3}><path d="M2 8l4-4 4 4" /></Icon>
          <Icon s={11} c="none"><path d="M1 8a2.500 2.500 0 0 1 2-4.500 3.500 3.500 0 0 1 6 .5v5H2z" fill="#c4c4c4" /><circle cx="8.800" cy="8.300" r="3" fill="#23a6df" /><path d="M8.800 6.500v3.500" stroke="#fff" /></Icon>
          <Icon s={11} c="none"><path d="M1.500 10a2.400 2.400 0 0 1 .5-4.500 3.800 3.800 0 0 1 7-.5A2.600 2.600 0 0 1 10.500 10z" fill="#1e90dd" /><path d="M1.500 10L8 6.200l4 2c0 1-.5 1.800-1.500 1.800z" fill="#4dc0f5" /></Icon>
          <Icon s={10} c="#777"><rect x="4.300" y="1" width="3.400" height="6" rx="1.700" /><path d="M2.500 5.500a3.500 3.500 0 0 0 7 0M6 9v2.500" /></Icon>
          <TrayText>ENG<br />UK</TrayText>
          <TrayGroup>
            <Icon c="#eee"><path d="M.8 4.800a7.500 7.500 0 0 1 10.400 0M2.500 6.800a5 5 0 0 1 7 0M4.200 8.600a2.600 2.600 0 0 1 3.600 0" /><circle cx="6" cy="10" r=".6" fill="#eee" /></Icon>
            <Icon c="#eee"><path d="M1 4.500h2L5.500 2v8L3 7.500H1zM7 4.200a2.500 2.500 0 0 1 0 3.600M8.700 2.700a4.600 4.600 0 0 1 0 6.600M10.300 1.300a6.600 6.600 0 0 1 0 9.400" /></Icon>
            <Icon c="#eee"><path d="M1.500 1l1.500 2.500h7.500V8M1 4.500v6h5" /><path d="M1.500 5h7l-3 5H1.500z" fill="#bbb" stroke="none" /><circle cx="9" cy="9" r="2" fill="#eee" /></Icon>
          </TrayGroup>
          <TrayGroup>
            <TrayText $end>22:15<br />01/10/2025</TrayText>
            <Icon c="#f4f4f4"><path d="M2 9h8L9 7V4.500a3 3 0 0 0-6 0V7zM4.800 10.500h2.400" fill="#f4f4f4" /><path d="M5.500 4h2L5.500 6.500h2" stroke="#272727" strokeWidth=".8" /><path d="M9 1.500h2L9.500 4h2" stroke="#fff" strokeWidth=".8" /></Icon>
          </TrayGroup>
        </Tray>
      </TaskBar>
    </Shell>
  );
}
